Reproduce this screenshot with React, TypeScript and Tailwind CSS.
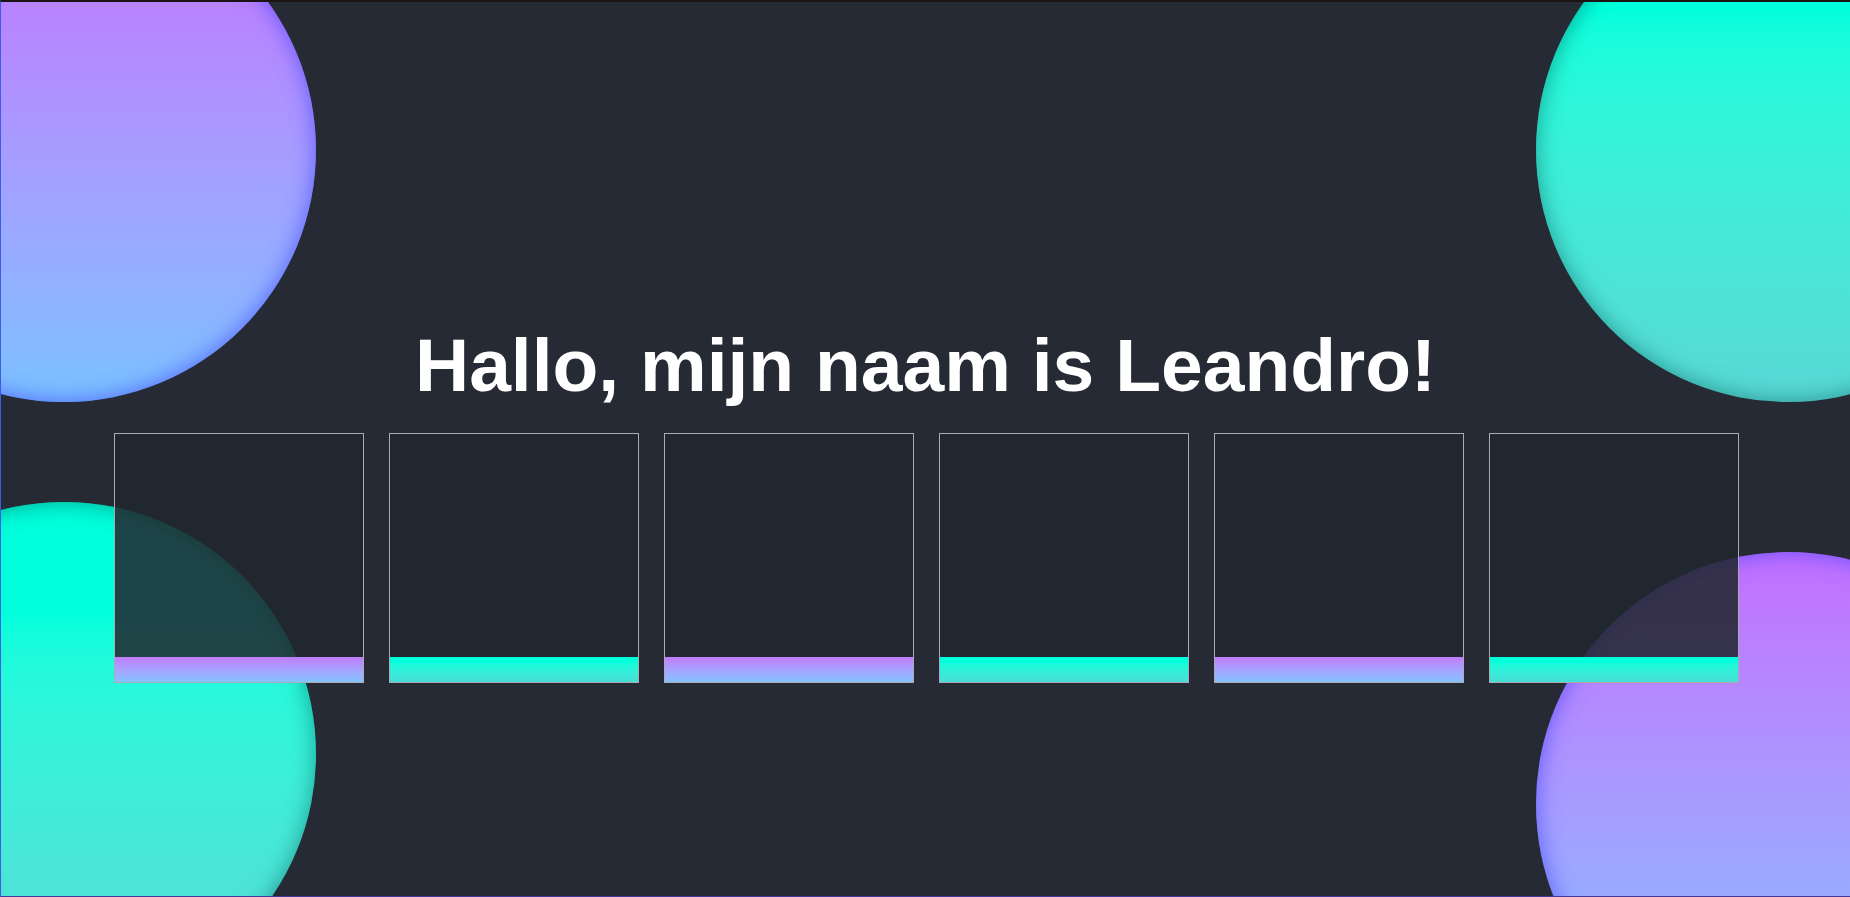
const cards = ['purple', 'cyan', 'purple', 'cyan', 'purple', 'cyan'] as const

// Decorative blobs sit behind everything; they are the only absolutely placed bits.
const Blob = ({ kind, className }: { kind: 'purple' | 'cyan'; className: string }) => (
  <div
    className={`absolute w-[504px] h-[504px] rounded-full ${
      kind === 'purple'
        ? 'bg-linear-to-b from-[#c26eff] to-[#79c2ff] shadow-[inset_0_0_22px_rgba(70,70,255,0.75)]'
        : 'bg-linear-to-b from-[#00ffdc] from-22% to-[#58d8d6] shadow-[inset_0_0_22px_rgba(0,90,80,0.55)]'
    } ${className}`}
  />
)

export default function App() {
  return (
    <div className="relative w-full h-[897px] overflow-hidden bg-[#262a35] border-t-2 border-t-[#1a1512] border-l border-l-[#3d5ee0] border-b border-b-[#46389a] font-['Liberation_Sans',Arial,sans-serif]">
      <Blob kind="purple" className="left-[-189px] top-[-104px]" />
      <Blob kind="cyan" className="right-[-190px] top-[-104px]" />
      <Blob kind="cyan" className="left-[-189px] top-[500px]" />
      <Blob kind="purple" className="right-[-190px] top-[550px]" />

      <div className="relative z-10 flex flex-col items-center gap-[25px] pt-[320px]">
        <h1 className="text-[75px] leading-[86px] font-bold text-white">Hallo, mijn naam is Leandro!</h1>

        <div className="flex gap-[25px] pl-[2px]">
          {cards.map((kind, i) => (
            <div
              key={i}
              className="w-[250px] h-[250px] flex flex-col justify-end border border-[#a9abb1] bg-[#21262f]/[0.86]"
            >
              <div
                className={`h-[25px] ${
                  kind === 'purple'
                    ? 'bg-linear-to-b from-[#c07aff] to-[#80c4ff]'
                    : 'bg-linear-to-b from-[#00ffdb] from-20% to-[#46dcd6]'
                }`}
              />
            </div>
          ))}
        </div>
      </div>
    </div>
  )
}
